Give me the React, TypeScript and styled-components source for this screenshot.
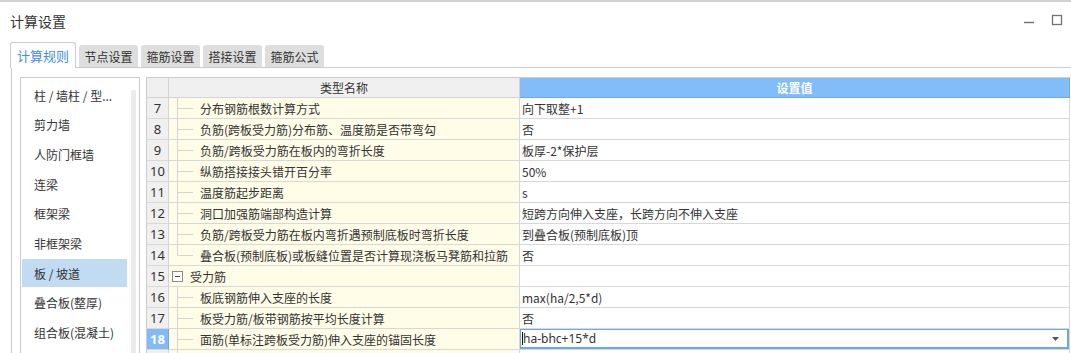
import React from "react";
import styled, {createGlobalStyle} from "styled-components";

const GlobalStyle = createGlobalStyle`
  html, body {
    margin: 0;
    padding: 0;
    background: #ffffff;
  }
  body {
    font-family: "Noto Sans CJK SC", "Noto Sans", sans-serif;
    color: #333333;
  }
`;

type TreeKind = "tee" | "end" | "group";

interface RuleRow {
  no: number;
  name: string;
  value: string;
  tree: TreeKind;
}

const ROWS: RuleRow[] = [
  {no: 7, name: "分布钢筋根数计算方式", value: "向下取整+1", tree: "tee"},
  {no: 8, name: "负筋(跨板受力筋)分布筋、温度筋是否带弯勾", value: "否", tree: "tee"},
  {no: 9, name: "负筋/跨板受力筋在板内的弯折长度", value: "板厚-2*保护层", tree: "tee"},
  {no: 10, name: "纵筋搭接接头错开百分率", value: "50%", tree: "tee"},
  {no: 11, name: "温度筋起步距离", value: "s", tree: "tee"},
  {no: 12, name: "洞口加强筋端部构造计算", value: "短跨方向伸入支座，长跨方向不伸入支座", tree: "tee"},
  {no: 13, name: "负筋/跨板受力筋在板内弯折遇预制底板时弯折长度", value: "到叠合板(预制底板)顶", tree: "tee"},
  {no: 14, name: "叠合板(预制底板)或板缝位置是否计算现浇板马凳筋和拉筋", value: "否", tree: "end"},
  {no: 15, name: "受力筋", value: "", tree: "group"},
  {no: 16, name: "板底钢筋伸入支座的长度", value: "max(ha/2,5*d)", tree: "tee"},
  {no: 17, name: "板受力筋/板带钢筋按平均长度计算", value: "否", tree: "tee"},
  {no: 18, name: "面筋(单标注跨板受力筋)伸入支座的锚固长度", value: "ha-bhc+15*d", tree: "tee"},
];

const CATEGORIES = [
  "柱 / 墙柱 / 型...",
  "剪力墙",
  "人防门框墙",
  "连梁",
  "框架梁",
  "非框架梁",
  "板 / 坡道",
  "叠合板(整厚)",
  "组合板(混凝土)",
];

const TABS = ["计算规则", "节点设置", "箍筋设置", "搭接设置", "箍筋公式"];

const SELECTED_ROW = 18;

export default function App() {
  return (
    <>
      <GlobalStyle/>
      <Window>
        <TitleBar>
          <Title>计算设置</Title>
          <WindowButtons>
            <svg width="12" height="12" viewBox="0 0 12 12">
              <line x1="1" y1="8.5" x2="11" y2="8.5" stroke="#707070" strokeWidth="1.4"/>
            </svg>
            <svg width="12" height="12" viewBox="0 0 12 12">
              <rect x="1.5" y="1.5" width="9" height="9" fill="none" stroke="#707070" strokeWidth="1.3"/>
            </svg>
          </WindowButtons>
        </TitleBar>

        <TabStrip>
          {TABS.map((t, i) => (
            <Tab key={t} $active={i === 0}>{t}</Tab>
          ))}
        </TabStrip>

        <TabBody>
          <Sidebar>
            <CategoryList>
              {CATEGORIES.map((c) => (
                <CategoryItem key={c} $selected={c === "板 / 坡道"}>{c}</CategoryItem>
              ))}
            </CategoryList>
            <ScrollTrack/>
          </Sidebar>

          <Grid>
            <HeaderRow>
              <HeadCell/>
              <HeadCell>类型名称</HeadCell>
              <HeadCell $accent>设置值</HeadCell>
            </HeaderRow>

            {ROWS.map((r) => {
              const selected = r.no === SELECTED_ROW;
              return (
                <Row key={r.no}>
                  <NumCell $selected={selected}>{r.no}</NumCell>
                  <NameCell>
                    {r.tree === "group" ? (
                      <>
                        <Expander>
                          <svg width="11" height="11" viewBox="0 0 11 11">
                            <rect x="0.5" y="0.5" width="10" height="10" fill="#ffffff" stroke="#8a8a8a"/>
                            <line x1="3" y1="5.5" x2="8" y2="5.5" stroke="#444"/>
                          </svg>
                        </Expander>
                        <GroupLabel>{r.name}</GroupLabel>
                      </>
                    ) : (
                      <>
                        <TreeLines kind={r.tree}/>
                        <NameText>{r.name}</NameText>
                      </>
                    )}
                  </NameCell>
                  <ValueCell>
                    {selected ? (
                      <Editor>
                        <Caret/>
                        <EditorText>{r.value}</EditorText>
                        <DropArrow>
                          <svg width="7" height="4" viewBox="0 0 7 4">
                            <path d="M0 0 H7 L3.5 4 Z" fill="#555"/>
                          </svg>
                        </DropArrow>
                      </Editor>
                    ) : (
                      r.value
                    )}
                  </ValueCell>
                </Row>
              );
            })}
            <Row>
              <NumCell/>
              <NameCell>
                <TreeLines kind="tee"/>
              </NameCell>
              <ValueCell/>
            </Row>
          </Grid>
        </TabBody>
      </Window>
    </>
  );
}

const TreeLines: React.FC<{kind: TreeKind}> = ({kind}) => (
  <TreeSvg width="31" height="20" viewBox="0 0 31 20">
    <line x1="8.5" y1="0" x2="8.5" y2={kind === "end" ? 10.5 : 20} stroke="#d4d4d4"/>
    <line x1="9" y1="10.5" x2="24" y2="10.5" stroke="#d4d4d4"/>
  </TreeSvg>
);

const Window = styled.div`
  width: 1071px;
  height: 353px;
  overflow: hidden;
  box-sizing: border-box;
  border-top: 2px solid #d2d2d2;
  background: #ffffff;
`;

const TitleBar = styled.div`
  height: 38px;
  display: flex;
  align-items: center;
  justify-content: space-between;
  padding: 0 8px 0 10px;
`;

const Title = styled.div`
  font-size: 14px;
  color: #333;
  line-height: 14px;
  margin-top: -1px;
`;

const WindowButtons = styled.div`
  display: flex;
  align-items: center;
  gap: 16px;
  margin-top: -3px;
`;

const TabStrip = styled.div`
  height: 27px;
  display: flex;
  align-items: flex-end;
  gap: 3px;
  padding-left: 10px;
`;

const Tab = styled.div<{$active?: boolean}>`
  box-sizing: border-box;
  height: ${({$active}) => ($active ? "26px" : "22px")};
  padding: ${({$active}) => ($active ? "0 6px" : "0 5px")};
  margin-bottom: ${({$active}) => ($active ? "-1px" : "0")};
  display: flex;
  align-items: center;
  font-size: ${({$active}) => ($active ? "13px" : "12px")};
  color: ${({$active}) => ($active ? "#3f8fe6" : "#333")};
  background: ${({$active}) => ($active ? "#ffffff" : "#dedede")};
  border: ${({$active}) => ($active ? "1px solid #cccccc" : "none")};
  border-bottom: none;
  border-radius: 3px 3px 0 0;
  position: relative;
  z-index: 1;
  min-width: 59px;
  justify-content: center;
`;

const TabBody = styled.div`
  margin-left: 11px;
  border-left: 1px solid #cccccc;
  border-top: 1px solid #cccccc;
  padding: 9px 1px 0 8px;
  display: flex;
  gap: 6px;
  align-items: flex-start;
`;

const Sidebar = styled.div`
  box-sizing: border-box;
  width: 120px;
  height: 300px;
  flex: none;
  border: 1px solid #cccccc;
  display: flex;
  padding: 3px 3px 0 1px;
  gap: 4px;
`;

const CategoryList = styled.div`
  flex: 1;
  display: flex;
  flex-direction: column;
  gap: 1.7px;
`;

const CategoryItem = styled.div<{$selected?: boolean}>`
  height: 28px;
  display: flex;
  align-items: center;
  padding-left: 12px;
  font-size: 12px;
  color: #333;
  white-space: nowrap;
  overflow: hidden;
  background: ${({$selected}) => ($selected ? "#c1dbf3" : "transparent")};
`;

const ScrollTrack = styled.div`
  width: 5px;
  margin-top: 9px;
  background: #ebebeb;
  border-radius: 2px;
  flex: none;
`;

const Grid = styled.div`
  box-sizing: border-box;
  width: 924px;
  flex: none;
  border-left: 1px solid #cccccc;
  border-top: 1px solid #cccccc;
`;

const HeaderRow = styled.div`
  display: grid;
  grid-template-columns: 22px 351px 550px;
  height: 20px;
`;

const HeadCell = styled.div<{$accent?: boolean}>`
  box-sizing: border-box;
  display: flex;
  align-items: center;
  justify-content: center;
  font-size: 12px;
  font-weight: ${({$accent}) => ($accent ? 700 : 400)};
  color: ${({$accent}) => ($accent ? "#ffffff" : "#333")};
  background: ${({$accent}) => ($accent ? "#82bdf9" : "#f0f0f0")};
  border-right: 1px solid ${({$accent}) => ($accent ? "#6aa8ea" : "#d4d4d4")};
  border-bottom: 1px solid ${({$accent}) => ($accent ? "#6aa8ea" : "#d4d4d4")};
`;

const Row = styled.div`
  display: grid;
  grid-template-columns: 22px 351px 550px;
  height: 21px;
`;

const Cell = styled.div`
  box-sizing: border-box;
  border-right: 1px solid #d8d8d8;
  border-bottom: 1px solid #d8d8d8;
  display: flex;
  align-items: center;
  font-size: 12px;
  white-space: nowrap;
  overflow: hidden;
`;

const NumCell = styled(Cell)<{$selected?: boolean}>`
  justify-content: center;
  font-family: "Noto Sans", "Liberation Sans", sans-serif;
  font-size: 13px;
  font-weight: ${({$selected}) => ($selected ? 700 : 400)};
  color: ${({$selected}) => ($selected ? "#ffffff" : "#333")};
  background: ${({$selected}) => ($selected ? "#80bbf7" : "#f0f0f0")};
  border-right-color: ${({$selected}) => ($selected ? "#6aa8ea" : "#d4d4d4")};
`;

const NameCell = styled(Cell)`
  background: #fffde8;
`;

const TreeSvg = styled.svg`
  flex: none;
  align-self: flex-start;
`;

const NameText = styled.span`
  margin-left: 0;
  color: #333;
`;

const Expander = styled.span`
  display: flex;
  margin-left: 3px;
  margin-right: 7px;
`;

const GroupLabel = styled.span`
  color: #333;
`;

const ValueCell = styled(Cell)`
  background: #ffffff;
  padding-left: 2px;
  color: #333;
  position: relative;
`;

const Editor = styled.div`
  position: absolute;
  inset: -1px 0 0 -1px;
  border: 2px solid #6aa8e6;
  display: flex;
  align-items: center;
  padding-left: 1px;
  background: #ffffff;
`;

const Caret = styled.span`
  width: 1px;
  height: 13px;
  background: #111;
  flex: none;
`;

const EditorText = styled.span`
  flex: 1;
  font-family: "Noto Sans", "Liberation Sans", sans-serif;
  font-size: 12px;
  color: #333;
`;

const DropArrow = styled.span`
  display: flex;
  margin-right: 8px;
`;
